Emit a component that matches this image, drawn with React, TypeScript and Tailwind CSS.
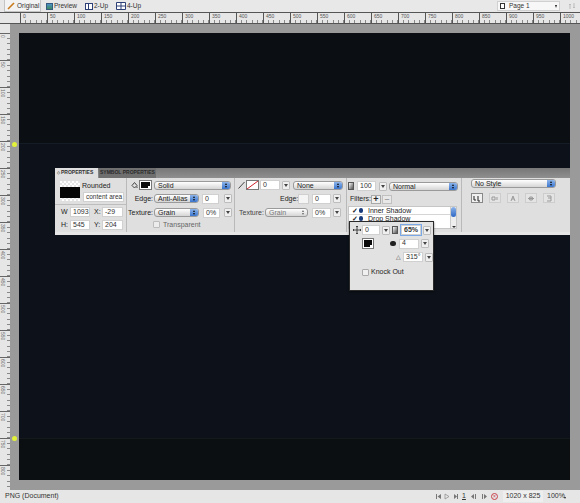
const FONT = "font-['Liberation_Sans',Arial,sans-serif]";

const RULER_MARKS = Array.from({ length: 21 }, (_, i) => i * 50);
const SIDE_MARKS = [0, 50, 100, 150, 200, 250, 300, 350, 400, 450, 500, 550, 600, 650, 700, 750, 800];

function TopRulerCell({ label }: { label: number }) {
  return (
    <div className="flex h-full w-[27px] shrink-0 flex-col justify-between border-l border-[#555]">
      <span className="pl-[2px] text-[5px] leading-[6px] text-[#555]">{label}</span>
      <div className="flex items-end">
        {[0, 1, 2, 3, 4].map((t) => (
          <div key={t} className="h-[3px] w-[5.4px] border-r border-[#888]" />
        ))}
      </div>
    </div>
  );
}

function SideRulerCell({ label }: { label: number }) {
  return (
    <div className="flex h-[27px] w-full shrink-0 justify-between border-t border-[#666]">
      <span className="pt-[1px] text-[5px] leading-[5px] text-[#666] [writing-mode:vertical-rl]">{label}</span>
      <div className="flex flex-col">
        {[0, 1, 2, 3, 4].map((t) => (
          <div key={t} className="h-[5.4px] w-[3px] border-b border-[#888]" />
        ))}
      </div>
    </div>
  );
}

function Field({ value, className }: { value: string; className: string }) {
  return (
    <div className={`flex h-[10px] shrink-0 items-center overflow-hidden border border-[#d0d0d0] bg-white pl-[2px] text-[7px] text-[#333] ${className}`}>
      {value}
    </div>
  );
}

function Arrow({ className = "" }: { className?: string }) {
  return (
    <div className={`flex h-[9px] w-[8px] shrink-0 items-center justify-center rounded-[1px] border border-[#bdbdbd] bg-[#efefef] ${className}`}>
      <div className="h-0 w-0 border-x-[2px] border-t-[3px] border-x-transparent border-t-[#444]" />
    </div>
  );
}

function Select({ label, className, disabled }: { label: string; className: string; disabled?: boolean }) {
  return (
    <div
      className={`flex h-[9px] shrink-0 items-center justify-between rounded-[3px] border border-[#9a9a9a] bg-gradient-to-b from-white to-[#d5d5d5] pl-[3px] text-[7px] leading-none ${disabled ? "text-[#777]" : "text-[#222]"} ${className}`}
    >
      <span>{label}</span>
      <div
        className={`flex h-full w-[8px] flex-col items-center justify-center gap-[1px] rounded-r-[2px] ${disabled ? "" : "bg-gradient-to-b from-[#8db4ea] to-[#3a76cf]"}`}
      >
        <div className={`h-0 w-0 border-x-[1.5px] border-b-[2px] border-x-transparent ${disabled ? "border-b-[#666]" : "border-b-[#111]"}`} />
        <div className={`h-0 w-0 border-x-[1.5px] border-t-[2px] border-x-transparent ${disabled ? "border-t-[#666]" : "border-t-[#111]"}`} />
      </div>
    </div>
  );
}

function Swatch({ className }: { className: string }) {
  return (
    <div className={`relative shrink-0 border border-[#777] bg-white p-[1px] ${className}`}>
      <div className="h-full w-full bg-[#0a0a0a]" />
      <div className="absolute bottom-0 right-0 h-[3px] w-[3px] bg-white" />
    </div>
  );
}

function StyleButton({ active, children }: { active?: boolean; children: React.ReactNode }) {
  return (
    <div className={`flex h-[10px] w-[12px] shrink-0 items-center justify-center border ${active ? "border-[#888] bg-[#f0f0f0] text-[#222]" : "border-[#cdcdcd] bg-[#e4e4e4] text-[#999]"}`}>
      {children}
    </div>
  );
}

function StyleGlyph({ d }: { d: string }) {
  return (
    <svg width="8" height="7" viewBox="0 0 8 7" fill="none" stroke="currentColor" strokeWidth="1">
      <path d={d} />
    </svg>
  );
}

function SelectionThumb() {
  return (
    <div className="flex h-[20px] w-[20px] shrink-0 flex-col bg-[repeating-conic-gradient(#e6e6e6_0_25%,#fff_0_50%)] bg-[length:4px_4px] pb-[3px] pt-[6px]">
      <div className="h-full w-full bg-[#070707]" />
    </div>
  );
}

function PropertiesPanel() {
  return (
    <div className={`absolute left-[36px] right-0 top-[135px] flex h-[67px] flex-col whitespace-nowrap ${FONT}`}>
      <div className="flex h-[10px] items-stretch bg-gradient-to-b from-[#777] to-[#8f8f8f] text-[5px] font-bold">
        <div className="flex w-[43px] items-center gap-[1px] bg-[#e0e0e0] pl-[2px] text-[#333]">
          <span className="text-[4px]">◇</span>PROPERTIES
        </div>
        <div className="ml-[1px] flex w-[57px] items-center justify-center bg-[#6f6f6f] text-[#2b2b2b]">SYMBOL PROPERTIES</div>
      </div>

      <div className="flex flex-1 border-b-[3px] border-[#e6e6e6] bg-[#dfdfdf] text-[7px] text-[#222]">
        {/* object */}
        <div className="flex w-[72px] shrink-0 flex-col border-r border-[#b9b9b9]">
          <div className="flex h-[27px] gap-[2px] border-b border-[#bdbdbd] pl-[5px] pt-[3px]">
            <SelectionThumb />
            <div className="flex flex-col gap-[2px] pt-[1px]">
              <span className="leading-[8px]">Rounded</span>
              <Field value="content area" className="ml-[1px] w-[41px] !text-[6.5px]" />
            </div>
          </div>
          <div className="flex flex-col gap-[2px] pl-[6px] pt-[2px]">
            <div className="flex items-center">
              <span className="w-[9px]">W</span>
              <Field value="1093" className="w-[20px]" />
              <span className="ml-[4px] w-[8px]">X:</span>
              <Field value="-29" className="w-[21px]" />
            </div>
            <div className="flex items-center">
              <span className="w-[9px]">H:</span>
              <Field value="545" className="w-[20px]" />
              <span className="ml-[4px] w-[8px]">Y:</span>
              <Field value="204" className="w-[21px]" />
            </div>
          </div>
        </div>

        {/* fill */}
        <div className="flex w-[108px] shrink-0 flex-col gap-[3.5px] border-r border-[#b9b9b9] pl-[1px] pt-[2px]">
          <div className="flex items-center">
            <svg className="ml-[3px] shrink-0" width="7" height="8" viewBox="0 0 7 8" fill="none" stroke="#333" strokeWidth="0.9">
              <path d="M1 4.5 3.5 1.5 6 4.5 3.5 7Z" />
              <path d="M6 5.5v1.5" />
            </svg>
            <Swatch className="ml-[1px] h-[10px] w-[13px]" />
            <Select label="Solid" className="ml-[2px] w-[77px]" />
          </div>
          <div className="flex items-center">
            <span className="w-[25px] text-right">Edge:</span>
            <Select label="Anti-Alias" className="ml-[1px] w-[45px]" />
            <Field value="0" className="ml-[3px] w-[17px]" />
            <Arrow className="ml-[5px]" />
          </div>
          <div className="flex items-center">
            <span className="w-[25px] text-right">Texture:</span>
            <Select label="Grain" className="ml-[1px] w-[45px]" />
            <Field value="0%" className="ml-[4px] w-[17px]" />
            <Arrow className="ml-[4px]" />
          </div>
          <div className="-mt-[1px] flex items-center pl-[25px]">
            <div className="h-[7px] w-[7px] shrink-0 rounded-[1px] border border-[#bcbcbc] bg-[#ececec]" />
            <span className="ml-[3px] leading-[8px] text-[#666]">Transparent</span>
          </div>
        </div>

        {/* stroke */}
        <div className="flex w-[112px] shrink-0 flex-col gap-[3.5px] border-r border-[#b9b9b9] pt-[2px]">
          <div className="flex items-center">
            <svg className="ml-[3px] shrink-0" width="7" height="8" viewBox="0 0 7 8" fill="none" stroke="#444" strokeWidth="1">
              <path d="M0.5 7.5 6.5 1" />
            </svg>
            <div className="relative ml-[1px] h-[10px] w-[13px] shrink-0 overflow-hidden border border-[#777] bg-white">
              <svg width="11" height="8" viewBox="0 0 11 8" className="absolute left-0 top-0" stroke="#d0202a" strokeWidth="1">
                <path d="M0 8 11 0" />
              </svg>
            </div>
            <Field value="0" className="ml-[1px] w-[20px]" />
            <Arrow className="ml-[2px]" />
            <Select label="None" className="ml-[3px] w-[50px]" />
          </div>
          <div className="flex items-center">
            <span className="ml-[45px] w-[17px] text-right">Edge:</span>
            <div className="ml-[1px] h-[10px] w-[11px] shrink-0 border border-[#cfcfcf] bg-[#f4f4f4]" />
            <Field value="0" className="ml-[3px] w-[19px]" />
            <Arrow className="ml-[2px]" />
          </div>
          <div className="flex items-center">
            <span className="ml-[4px] w-[24px] text-[#444]">Texture:</span>
            <Select disabled label="Grain" className="ml-[2px] w-[43px]" />
            <Field value="0%" className="ml-[4px] w-[19px]" />
            <Arrow className="ml-[2px]" />
          </div>
        </div>

        {/* opacity, filters */}
        <div className="relative flex w-[115px] shrink-0 flex-col border-r border-[#b9b9b9] pl-[1px] pt-[3px]">
          <div className="flex items-center">
            <div className="h-[8px] w-[6px] shrink-0 border border-[#555] bg-gradient-to-br from-white to-[#555]" />
            <Field value="100" className="ml-[3px] w-[19px]" />
            <Arrow className="ml-[3px]" />
            <Select label="Normal" className="ml-[2px] w-[69px]" />
          </div>
          <div className="mt-[3px] flex items-center pl-[2px]">
            <span className="w-[20px]">Filters:</span>
            <div className="ml-[1px] flex h-[9px] w-[10px] items-center justify-center border border-[#a9a9a9] bg-[#efefef] text-[9px] font-bold leading-none">+</div>
            <div className="ml-[1px] flex h-[9px] w-[10px] items-center justify-center border border-[#c0c0c0] bg-[#e8e8e8] text-[8px] leading-none text-[#666]">–</div>
          </div>
          <div className="mt-[1px] flex h-[23px] w-[109px] border border-[#c6c6c6] bg-white">
            <div className="flex-1 text-[7px] leading-[7px]">
              <div className="flex h-[8px] items-center border-b border-[#d5d5d5]">
                <span className="ml-[3px] w-[7px] font-bold">✓</span>
                <span className="h-[5px] w-[4px] rounded-full bg-[#17387a]" />
                <span className="ml-[5px]">Inner Shadow</span>
              </div>
              <div className="flex h-[7px] items-center">
                <span className="ml-[3px] w-[7px] font-bold">✓</span>
                <span className="h-[5px] w-[4px] rounded-full bg-[#17387a]" />
                <span className="ml-[5px]">Drop Shadow</span>
              </div>
            </div>
            <div className="flex w-[6px] flex-col items-center justify-between border-l border-[#ccc] bg-[#eee]">
              <div className="h-[10px] w-full rounded-full bg-gradient-to-b from-[#8db4ea] to-[#2c66c4]" />
              <div className="h-0 w-0 border-x-[2px] border-t-[2px] border-x-transparent border-t-[#333]" />
            </div>
          </div>

          {/* shadow popup */}
          <div className="absolute left-[2px] top-[43px] z-10 flex h-[70px] w-[85px] flex-col border border-[#2a2a2a] bg-[#e2e2e2] pl-[3px] pt-[3px] shadow-[0_1px_2px_rgba(0,0,0,0.5)]">
            <div className="flex items-center">
              <svg className="shrink-0" width="8" height="8" viewBox="0 0 8 8" fill="none" stroke="#333" strokeWidth="0.9">
                <path d="M4 0v8M0 4h8M3 1l1-1 1 1M3 7l1 1 1-1M1 3 0 4l1 1M7 3l1 1-1 1" />
              </svg>
              <Field value="0" className="ml-[1px] w-[18px]" />
              <Arrow className="ml-[2px]" />
              <div className="ml-[2px] h-[8px] w-[6px] shrink-0 border border-[#555] bg-gradient-to-br from-white to-[#555]" />
              <Field value="65%" className="ml-[3px] w-[20px] border-[#4a80d4] bg-[#b5cdf0] font-bold ring-1 ring-[#7aa7e6]" />
              <Arrow className="ml-[2px]" />
            </div>
            <div className="mt-[3px] flex items-center">
              <Swatch className="ml-[9px] h-[11px] w-[12px]" />
              <div className="ml-[16px] h-[5px] w-[6px] shrink-0 rounded-full bg-[#222] blur-[0.5px]" />
              <Field value="4" className="ml-[3px] w-[20px]" />
              <Arrow className="ml-[2px]" />
            </div>
            <div className="mt-[3px] flex items-center">
              <span className="ml-[43px] w-[6px] text-[6px] leading-none text-[#444]">△</span>
              <Field value="315°" className="ml-[1px] w-[20px]" />
              <Arrow className="ml-[2px]" />
            </div>
            <div className="mt-[6px] flex items-center pl-[9px]">
              <div className="h-[7px] w-[7px] shrink-0 rounded-[1px] border border-[#aaa] bg-[#f0f0f0]" />
              <span className="ml-[2px] leading-[8px]">Knock Out</span>
            </div>
          </div>
        </div>

        {/* style */}
        <div className="flex flex-1 flex-col pl-[9px] pt-[1px]">
          <Select label="No Style" className="w-[85px]" />
          <div className="mt-[5px] flex gap-[6px]">
            <StyleButton active><StyleGlyph d="M1 1v4h2M5 1v5h2" /></StyleButton>
            <StyleButton><StyleGlyph d="M1 2h3v3H1ZM6 2v3" /></StyleButton>
            <StyleButton><StyleGlyph d="M2 6 4 1l2 5M3 4h2" /></StyleButton>
            <StyleButton><StyleGlyph d="M1 3.500h6M4 1v5M2 2l4 3M6 2 2 5" /></StyleButton>
            <StyleButton><StyleGlyph d="M2 1h4v5H2M3 3h3" /></StyleButton>
          </div>
        </div>
      </div>
    </div>
  );
}

export default function App() {
  return (
    <div className={`flex h-[503px] w-[580px] flex-col overflow-hidden whitespace-nowrap bg-[#e8e8e8] ${FONT}`}>
      {/* view tabs */}
      <div className="flex h-[12px] shrink-0 items-stretch text-[6.5px] text-[#333]">
        <div className="ml-[4px] flex w-[37px] items-center gap-[2px] border-x border-b border-[#c4c4c4] bg-[#f3f3f3] pl-[2px]">
          <svg width="8" height="8" viewBox="0 0 8 8" stroke="#c97a1c" strokeWidth="1.6" fill="none">
            <path d="M1 7 7 1" />
          </svg>
          Original
        </div>
        <div className="ml-[5px] flex w-[31px] items-center gap-[1px]">
          <div className="h-[7px] w-[9px] border border-[#355a80] bg-gradient-to-b from-[#4d8fc4] to-[#3f8a5c]" />
          Preview
        </div>
        <div className="ml-[8px] flex w-[23px] items-center gap-[1px]">
          <div className="flex h-[7px] w-[9px] border border-[#2d3f77] bg-white">
            <div className="w-1/2 border-r border-[#2d3f77]" />
          </div>
          2-Up
        </div>
        <div className="ml-[8px] flex items-center gap-[1px]">
          <svg width="10" height="8" viewBox="0 0 10 8" fill="white" stroke="#2d3f77">
            <path d="M.5.5h9v7h-9ZM5 .5v7M.5 4h9" />
          </svg>
          4-Up
        </div>
        <div className="ml-auto mt-[1px] flex h-[10px] w-[63px] items-center justify-between border border-[#d0d0d0] bg-[#f7f7f7] px-[2px]">
          <div className="flex items-center gap-[4px]">
            <div className="h-[6px] w-[5px] border border-[#333] bg-white" />
            <span>Page 1</span>
          </div>
          <div className="h-0 w-0 border-x-[1.5px] border-t-[3px] border-x-transparent border-t-[#222]" />
        </div>
        <svg className="ml-[8px] mr-[4px] mt-[2px]" width="8" height="8" viewBox="0 0 8 8" fill="none" stroke="#bbb" strokeWidth="1">
          <path d="M2 7V2L1 3M2 2l1 1M6 1v5L5 5M6 6l1-1" />
        </svg>
      </div>

      {/* top ruler */}
      <div className="flex h-[12px] shrink-0 overflow-hidden border-y border-[#555] bg-[#e6e6e6] pl-[20px]">
        {RULER_MARKS.map((m) => (
          <TopRulerCell key={m} label={m} />
        ))}
      </div>

      <div className="flex min-h-0 flex-1">
        {/* side ruler */}
        <div className="flex w-[10px] shrink-0 flex-col overflow-hidden bg-[#e6e6e6] pt-[9px]">
          {SIDE_MARKS.map((m) => (
            <SideRulerCell key={m} label={m} />
          ))}
        </div>

        {/* workspace */}
        <div className="relative flex-1 bg-[#9a9a9a] pb-[10px] pl-[9px] pr-[10px] pt-[9px]">
          <div className="relative flex h-full flex-col">
            <div className="h-[111px] border-b border-[#161c25] bg-[#0b0e12]" />
            <div className="flex-1 bg-[#0d121a]" />
            <div className="h-[42px] border-t border-[#141a1c] bg-[#0b0f11]" />
            <PropertiesPanel />
          </div>
          <div className="absolute left-[2px] top-[118px] h-[5px] w-[5px] rounded-full bg-[#e2f23a]" />
          <div className="absolute left-[2px] top-[412px] h-[5px] w-[5px] rounded-full bg-[#e2f23a]" />
        </div>
      </div>

      {/* status bar */}
      <div className="flex h-[13px] shrink-0 items-center bg-[#e6e6e6] pl-[5px] text-[7px] text-[#333]">
        <span>PNG (Document)</span>
        <div className="ml-auto flex items-center">
          <svg width="24" height="7" viewBox="0 0 24 7" fill="#777">
            <path d="M1 1h1v5H1ZM6 1v5L2.500 3.500Z" />
            <path d="M10 1v5l4-2.500Z" fill="none" stroke="#888" strokeWidth="0.7" />
            <path d="M19 1v5l3-2.500ZM22 1h1v5h-1Z" />
          </svg>
          <span className="ml-[3px] w-[6px] underline">1</span>
          <svg className="ml-[2px]" width="17" height="7" viewBox="0 0 17 7" fill="#777">
            <path d="M4 1v5L1 3.500ZM5 1h1v5H5Z" />
            <path d="M12 1h1v5h-1ZM14 1v5l3-2.500Z" />
          </svg>
          <div className="ml-[4px] flex h-[7px] w-[7px] items-center justify-center rounded-full border border-[#c8404a] text-[5px] leading-none text-[#c8404a]">×</div>
          <span className="ml-[5px] w-[40px] bg-[#eeeeee] text-center text-[7px]">1020 x 825</span>
          <span className="ml-[4px] w-[17px]">100%</span>
          <div className="mr-[14px] mt-[3px] h-0 w-0 border-x-[1.5px] border-t-[2px] border-x-transparent border-t-[#222]" />
        </div>
      </div>
    </div>
  );
}
